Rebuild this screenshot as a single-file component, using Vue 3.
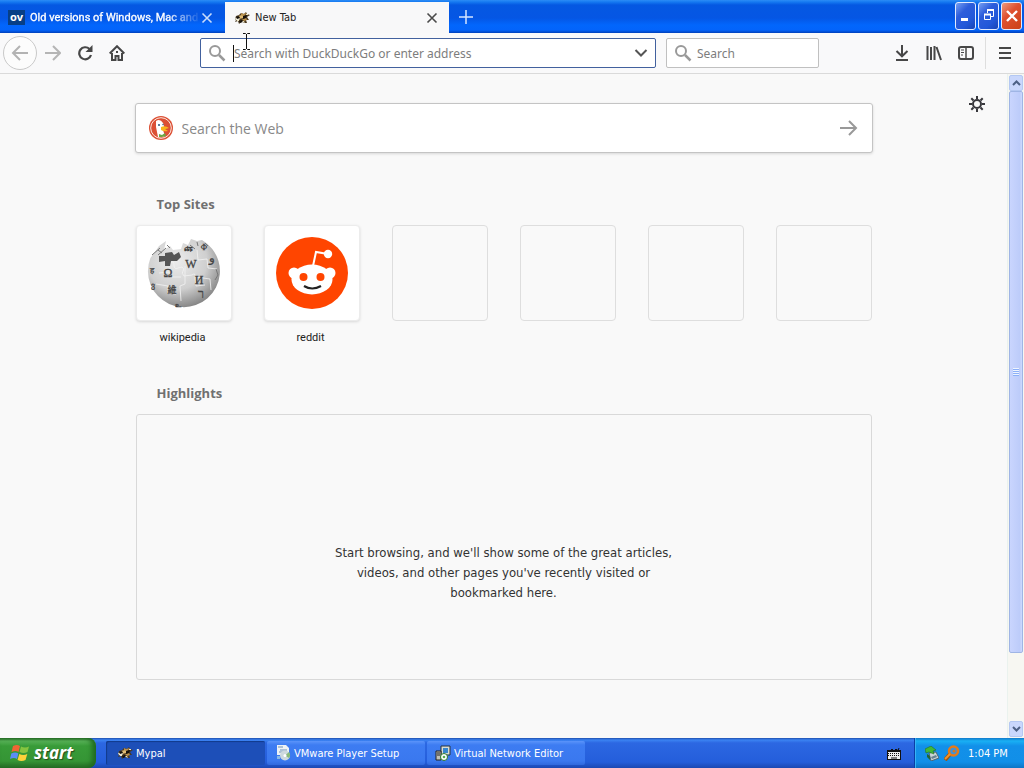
<script setup>
const emptySites = [1, 2, 3, 4]
</script>

<template>
  <div class="screen">
    <svg class="defs" aria-hidden="true">
      <defs>
        <radialGradient id="globe" cx=".4" cy=".32" r=".7"><stop offset="0" stop-color="#ececec" /><stop offset=".6" stop-color="#cfcfcf" /><stop offset="1" stop-color="#858585" /></radialGradient>
        <symbol id="raccoon" viewBox="0 0 16 14">
          <path d="M1 8 2 5 5 4 7 2 10 3 12 1 13 3 16 4 13 6 15 9 12 9 13 12 10 12 8 10 5 13 4 10 1 11 2 9Z" fill="#4b3a22" />
          <path d="m4 5 4-1 3 1-2 2-4 1Z" fill="#e0bc74" />
          <path d="m1 7 3-1 2 2-2 2-2-1Z" fill="#eeebd8" />
          <path d="m7 2 2 1 4-1-3 3-3-1ZM8 8l4-1 1 2-3 1Z" fill="#b98f4a" />
          <path d="m2 6 3-1 1 2-3 1ZM9 5l4-1-1 3-3 1ZM5 10l3-1 1 2-3 1Z" fill="#15100b" />
          <path d="m8 10 2 0 1 2-2-1ZM3 9h2v1H3ZM12 3h2v1h-2Z" fill="#efe6c4" />
        </symbol>
        <symbol id="lens" viewBox="0 0 18 18"><circle cx="7" cy="7" r="5" fill="none" stroke="#999" stroke-width="2" /><path d="m11 11 5.500 5.500" stroke="#999" stroke-width="2.500" /></symbol>
      </defs>
    </svg>

    <header class="titlebar">
      <div class="tab inactive">
        <span class="ov">ov</span>
        <span class="tab-title faded">Old versions of Windows, Mac and</span>
        <button class="tab-close" aria-label="Close old versions tab"><svg width="12" height="12" viewBox="0 0 12 12"><path d="m1.500 1.500 9 9m0-9-9 9" stroke="#c9dcfb" stroke-width="1.600" /></svg></button>
      </div>
      <div class="tab active">
        <svg class="tab-icon" width="16" height="14"><use href="#raccoon" /></svg>
        <span class="tab-title">New Tab</span>
        <button class="tab-close" aria-label="Close New Tab"><svg width="12" height="12" viewBox="0 0 12 12"><path d="m1.500 1.500 9 9m0-9-9 9" stroke="#4a4a4a" stroke-width="1.600" /></svg></button>
      </div>
      <button class="add-tab" aria-label="Open a new tab"><svg width="14" height="14" viewBox="0 0 14 14"><path d="M7 0v14M0 7h14" stroke="#d5e5ff" stroke-width="1.500" /></svg></button>
      <div class="window-buttons">
        <button aria-label="Minimize"><svg width="18" height="22" viewBox="0 0 18 22"><path d="M4 14.500h7" stroke="#fff" stroke-width="3" /></svg></button>
        <button aria-label="Restore"><svg width="18" height="22" viewBox="0 0 18 22" fill="none" stroke="#fff"><path d="M7.500 8V5.500h6v6H11" /><path d="M7 5h7" stroke-width="2" /><path d="M4.500 9.500h6v5h-6z" /><path d="M4 9.500h7" stroke-width="2" /></svg></button>
        <button class="red" aria-label="Close"><svg width="18" height="22" viewBox="0 0 18 22"><path d="m4 6 10 10m0-10L4 16" stroke="#fff" stroke-width="2.400" /></svg></button>
      </div>
    </header>

    <nav class="toolbar">
      <button class="back" aria-label="Back"><svg width="18" height="16" viewBox="0 0 18 16" fill="none" stroke="#b3b3b3" stroke-width="2"><path d="M17 8H2m7-7L2 8l7 7" /></svg></button>
      <button class="tool forward" aria-label="Forward"><svg width="16" height="16" viewBox="0 0 16 16" fill="none" stroke="#b5b5b5" stroke-width="2"><path d="M0 8h14M8 1l7 7-7 7" /></svg></button>
      <button class="tool" aria-label="Reload"><svg width="16" height="16" viewBox="0 0 16 16"><path d="M12.500 4A6 6 0 1 0 14 10" fill="none" stroke="#474747" stroke-width="2.200" /><path d="M15.500 0v7H8.500Z" fill="#474747" /></svg></button>
      <button class="tool" aria-label="Home"><svg width="16" height="16" viewBox="0 0 16 16"><path d="M.7 8.500 8 1.200l7.300 7.300" fill="none" stroke="#474747" stroke-width="2" /><path d="M3 8v7h3.500v-4h3v4H13V8" fill="none" stroke="#474747" stroke-width="2" /><path d="M7 6h2v2H7z" fill="#474747" /></svg></button>
      <div class="address">
        <svg width="18" height="18"><use href="#lens" /></svg>
        <input type="text" aria-label="Address" placeholder="Search with DuckDuckGo or enter address" />
        <button aria-label="Show history"><svg width="14" height="8" viewBox="0 0 14 8"><path d="m1.500 1 5.500 5.500L12.500 1" fill="none" stroke="#555" stroke-width="2" /></svg></button>
        <span class="caret"></span>
      </div>
      <div class="search">
        <svg width="18" height="18"><use href="#lens" /></svg>
        <input type="search" aria-label="Search" placeholder="Search" />
      </div>
      <div class="tools">
        <button class="tool" aria-label="Downloads"><svg width="16" height="16" viewBox="0 0 16 16"><path d="M8 0v11M2.500 6 8 11.300 13.500 6M2 15h12" fill="none" stroke="#474747" stroke-width="2" /></svg></button>
        <button class="tool" aria-label="Library"><svg width="16" height="16" viewBox="0 0 16 16"><path d="M1.500 1v14M5 2v13M8.500 1v14M10.500 2l4.500 13" fill="none" stroke="#474747" stroke-width="2" /></svg></button>
        <button class="tool" aria-label="Sidebar"><svg width="16" height="14" viewBox="0 0 16 14" fill="none" stroke="#474747"><rect x="1" y="1" width="14" height="12" rx="2" stroke-width="2" /><path d="M8 1v12" stroke-width="1.500" /><path d="M3 4h3M3 6.500h3M3 9h2" /></svg></button>
        <button class="tool menu" aria-label="Menu"><svg width="14" height="14" viewBox="0 0 14 14"><path d="M1 2h12M1 7h12M1 12h12" stroke="#474747" stroke-width="2" /></svg></button>
      </div>
    </nav>

    <div class="viewport">
      <main class="page">
        <button class="gear" aria-label="Customize page"><svg width="16" height="16" viewBox="0 0 16 16" fill="none" stroke="#38383d"><circle cx="8" cy="8" r="4" stroke-width="2" /><path d="M8 0v3m0 10v3M0 8h3m10 0h3M2.300 2.300l2.200 2.200m7 7 2.200 2.200m0-11.400-2.200 2.200m-7 7-2.200 2.200" stroke-width="2" /></svg></button>
        <div class="column">
          <form class="web-search" @submit.prevent>
            <svg width="24" height="24" viewBox="0 0 24 24">
              <circle cx="12" cy="12" r="12" fill="#dc5035" /><circle cx="12" cy="12" r="10.300" fill="none" stroke="#fbe7df" />
              <path d="M7 5q4-3 7 2 2 4 0 7l2 6q-4 2-7 1L7 11Z" fill="#fff" /><circle cx="10" cy="9" r="1" fill="#28567a" /><circle cx="14" cy="8.500" r=".7" fill="#28567a" />
              <path d="M12 11q4-2 8 1-3 1-4 1l3 2q-4 1-7-1Z" fill="#f9b51d" /><path d="m10 18 3 1 3-2 1 3-4 1-3 0Z" fill="#6aa744" />
            </svg>
            <input type="search" aria-label="Search the Web" placeholder="Search the Web" />
            <button aria-label="Submit search"><svg width="18" height="16" viewBox="0 0 18 16"><path d="M0 8h15M9 1l7 7-7 7" fill="none" stroke="#999" stroke-width="2" /></svg></button>
          </form>

          <section class="top-sites">
            <h2>Top Sites</h2>
            <div class="sites">
              <a href="#wikipedia" class="site">
                <span class="tile filled">
                  <svg width="74" height="74" viewBox="0 0 74 74">
                    <path d="M12 10 19 5 17 14 23 10 26 14 34 13 36 7 41 9 44 3 50 5 55 4 A36 36 0 1 1 3.400 22 L8 16Z" fill="url(#globe)" />
                    <path d="m12 20 6 0 0-3 7-1 2 3 5-3 2 5-4 4-6 0-1 5-5 0 0-5-6 1Z" fill="#555" />
                    <path d="M24 27q3-3 3 2t4 3l4-1q3 2 1 4t1 5l8-1q4-3 3 3l1 8 9-1M38 30l0 18-5 2 1 15M12 37l10-1 1 5 11 0M9 48l12 2 0 7 8 1M50 14l1 10 9-1 1 9 9 1M49 41l14 2 1 11" fill="none" stroke="#f3f3f3" stroke-width=".8" />
                    <g fill="#444" stroke="#444" stroke-width=".3" font-family="Liberation Serif, serif" font-size="12" text-anchor="middle"><text x="21" y="41">Ω</text><text x="44" y="32">W</text><text x="52" y="48">И</text><text x="65" y="26">و</text><text x="5" y="37" font-size="8">ह</text><text x="6" y="52" font-size="8">ვ</text><text x="41" y="15" font-size="8">ጩ</text><text x="57" y="14" font-size="8">Ф</text><text x="54" y="62">ר</text><text x="31" y="71" font-size="7">உ</text><text x="25" y="57" font-size="9" class="cjk">維</text></g>
                    <path d="m5 19 8-7m-2 7 8-7m1-3 3 3m-12 2 4 3M43 9l5 4m2-7 1 4m7-3 3 3M69 33l2 6-3 5" stroke="#777" fill="none" />
                  </svg>
                </span>
                <span class="site-name">wikipedia</span>
              </a>
              <a href="#reddit" class="site">
                <span class="tile filled">
                  <svg width="72" height="72" viewBox="0 0 72 72"><circle cx="36" cy="36" r="36" fill="#ff4500" /><g fill="#fff"><circle cx="18" cy="36" r="5.500" /><circle cx="54" cy="36" r="5.500" /><ellipse cx="36" cy="42.500" rx="20.500" ry="15" /><circle cx="52" cy="17" r="4.200" /></g><path d="m37 29 3-14 12 2" fill="none" stroke="#fff" stroke-width="2" /><circle cx="27.500" cy="40" r="4" fill="#ff4500" /><circle cx="44.500" cy="40" r="4" fill="#ff4500" /><path d="M28 49q8 5 17 0" fill="none" stroke="#222" stroke-width="2.200" /></svg>
                </span>
                <span class="site-name">reddit</span>
              </a>
              <div v-for="n in emptySites" :key="n" class="site"><span class="tile"></span></div>
            </div>
          </section>

          <section class="highlights">
            <h2>Highlights</h2>
            <div class="empty"><p>Start browsing, and we'll show some of the great articles, videos, and other pages you've recently visited or bookmarked here.</p></div>
          </section>
        </div>
      </main>
      <div class="scrollbar">
        <button aria-label="Scroll up"><svg width="9" height="6" viewBox="0 0 9 6"><path d="m1 5 3.500-3.500L8 5" fill="none" stroke="#4d6185" stroke-width="2" /></svg></button>
        <div class="track"><div class="thumb"><span class="grip"></span></div><div class="rest"></div></div>
        <button aria-label="Scroll down"><svg width="9" height="6" viewBox="0 0 9 6"><path d="m1 1 3.500 3.500L8 1" fill="none" stroke="#4d6185" stroke-width="2" /></svg></button>
      </div>
    </div>

    <footer class="taskbar">
      <button class="start">
        <svg width="20" height="20" viewBox="0 0 20 20"><path d="M3 3q4-2 7 0L8.500 9q-3-2-7 0Z" fill="#ef6534" /><path d="M11 3.500q4 2 8 0L17.500 9q-4 2-8 0Z" fill="#85c440" /><path d="M1.300 10.500q4-2 7 0L7 16q-3-2-7 0Z" fill="#5b8df5" /><path d="M9.300 11q4 2 8 0L15.500 17q-4 2-8 0Z" fill="#fdd23a" /></svg>
        <span>start</span>
      </button>
      <div class="tasks">
        <button class="task pressed"><svg width="16" height="14"><use href="#raccoon" /></svg>Mypal</button>
        <button class="task"><svg width="16" height="16" viewBox="0 0 16 16"><path d="M2 0h9l3 3v7H2Z" fill="#eef2f5" /><path d="M3 2h5M5 5h7M4 7h5" stroke="#6c91b7" /><circle cx="10" cy="10.500" r="5" fill="#cdd9df" /><path d="M10 10.500 14 7a5 5 0 0 1 0 6Z" fill="#88b97b" /><circle cx="10" cy="10.500" r="1.500" fill="#fff" /><path d="M2 11h3v3H2Z" fill="#8ab9e5" /></svg>VMware Player Setup</button>
        <button class="task"><svg width="16" height="16" viewBox="0 0 16 16"><path d="M6 1h9v9H6Z" fill="#d9ddd4" stroke="#26333d" /><path d="M8 3h5v5H8Z" fill="#3786ce" /><path d="M1 6h5v9H1Z" fill="#c1c1b8" stroke="#222" /><path d="M2 8h3m-3 2h3" stroke="#222" /><circle cx="9" cy="12" r="3.500" fill="#fff" stroke="#26772d" /><circle cx="9" cy="12" r="1.300" fill="#55aa4e" /></svg>Virtual Network Editor</button>
      </div>
      <button class="keyboard" aria-label="Keyboard"><svg width="14" height="13" viewBox="0 0 14 13"><path d="M4 3q1-2 2 0t2 0 2 0 2-2" fill="none" stroke="#111" /><path d="M0 4h14v9H0Z" fill="#eee" stroke="#111" stroke-width="2" /><path d="M1 6.500h12M1 8.500h12" stroke="#111" stroke-dasharray="1 1" /><path d="M4 11h6" stroke="#111" /></svg></button>
      <div class="tray">
        <svg width="14" height="15" viewBox="0 0 14 15"><path d="m4 7 7-1 3 6-8 3Z" fill="#ccd6d7" stroke="#4d6370" /><path d="m6 11 5-2 1 2-5 2Z" fill="#6a8291" /><path d="m0 3 6-3 5 4-3 1 1 3-5-2-3 1Z" fill="#41b837" stroke="#23702a" stroke-width=".6" /><path d="m2 8 3 2v4l-3-3Z" fill="#236431" /></svg>
        <svg width="16" height="16" viewBox="0 0 16 16"><path d="m6 9-5 6" stroke="#9f5410" stroke-width="4" /><circle cx="9.500" cy="6" r="4.500" fill="#3b92dc" stroke="#e37b18" stroke-width="2.500" /><path d="m6 9-5 5" stroke="#f29429" stroke-width="2" /><circle cx="10" cy="6" r="1.500" fill="#d57822" /></svg>
        <time>1:04 PM</time>
      </div>
    </footer>

    <svg class="pointer" width="9" height="17" viewBox="0 0 9 17"><path d="M1 .5h2.500l1 1 1-1H8M4.500 1v15M1 16.500h2.500l1-1 1 1H8" fill="none" stroke="#111" /></svg>
  </div>
</template>

<style>
body { margin: 0; background: #f9f9fa; }
</style>

<style scoped>
.screen { position: relative; display: flex; flex-direction: column; min-height: 100vh; font-family: "DejaVu Sans Condensed", "DejaVu Sans", sans-serif; font-size: 11px; color: #222; background: #f9f9f9; }
.screen *, .screen *::before, .screen *::after { box-sizing: border-box; }
.defs { position: absolute; width: 0; height: 0; }
button { padding: 0; border: 0; background: none; font: inherit; color: inherit; display: flex; align-items: center; justify-content: center; flex-shrink: 0; }
input { border: 0; outline: 0; padding: 0; background: none; min-width: 0; flex: 1; font: inherit; color: #222; appearance: none; }
svg { flex-shrink: 0; }
.cjk { font-family: "Noto Sans CJK TC", sans-serif; }

.titlebar { display: flex; height: 33px; background: linear-gradient(#2c8cf6 0, #1579f1 2px, #0558e2 5px, #0556e4 18px, #0266fc 25px, #0364fb 30px, #0040bb 33px); }
.tab { display: flex; align-items: center; width: 224px; margin-top: 2px; padding: 0 11px 0 8px; }
.tab.inactive { width: 225px; padding-right: 12px; color: #fff; }
.tab.active { background: #f8f8f9; }
.ov { width: 17px; height: 15px; margin-right: 5px; background: #073f86; color: #fff; font: bold 11px/13px "Noto Sans", sans-serif; text-align: center; }
.tab-icon { margin: 0 5px 0 1px; }
.tab-title { flex: 1; min-width: 0; white-space: nowrap; }
.faded { font-family: Roboto, sans-serif; mask-image: linear-gradient(90deg, #000 80%, transparent 100%); -webkit-text-stroke: 0.3px #fff; }
.tab-close { width: 12px; height: 14px; }
.add-tab { width: 34px; }
.window-buttons { display: flex; gap: 2px; margin: 2px 2px 0 auto; }
.window-buttons button { width: 21px; height: 28px; border: 1px solid #e2ebff; border-radius: 3px; background: linear-gradient(135deg, #779ff2, #2d5ddb 35%, #2258d9 70%, #1744b5); }
.window-buttons .red { background: linear-gradient(135deg, #ed9a80, #df5130 40%, #cb4117); }

.toolbar { display: flex; align-items: center; height: 41px; padding: 0 0 0 3px; background: #f9f9fa; border-bottom: 1px solid #dadada; font-family: "Noto Sans", sans-serif; font-size: 12px; }
.back { width: 34px; height: 34px; border: 1px solid #c9c9c9; border-radius: 50%; background: #fcfcfc; }
.tool { width: 32px; height: 32px; }
.address { position: relative; display: flex; align-items: center; flex: 440 1 0; min-width: 0; height: 30px; margin-left: 67px; padding: 0 7px; border: 1px solid #42619e; border-radius: 2px; background: #fff; }
.address svg, .search svg { margin-right: 8px; }
.address button svg { margin: 0; }
.address button { width: 14px; height: 24px; }
.caret { position: absolute; left: 32px; top: 6px; width: 1px; height: 17px; background: #111; }
.search { display: flex; align-items: center; flex: 137 1 0; min-width: 0; height: 30px; margin-left: 10px; padding: 0 7px; border: 1px solid #c0c0c0; border-radius: 2px; background: #fff; }
.search svg { margin-right: 5px; }
.toolbar input::placeholder { color: #7d7d7d; opacity: 1; }
.tools { display: flex; margin-left: 67px; align-items: center; }
.menu { width: 39px; margin-left: 3px; border-left: 1px solid #dedede; }

.viewport { display: flex; flex: 1; }
.page { position: relative; flex: 1; min-width: 0; padding: 29px 24px 40px; font-family: "Open Sans", sans-serif; }
.gear { position: absolute; top: 22px; right: 22px; width: 16px; height: 16px; }
.column { max-width: 738px; margin: 0 auto; }
.web-search { display: flex; align-items: center; height: 50px; padding: 0 14px 0 13px; gap: 9px; border: 1px solid #c4c4c4; border-radius: 3px; background: #fff; box-shadow: 0 1px 3px #0002; font-size: 14px; }
.web-search input::placeholder { color: #888; opacity: 1; }
h2 { margin: 0 0 0 22px; font-size: 13px; line-height: 20px; font-weight: 700; color: #707070; }
.top-sites { margin-top: 41px; }
.sites { display: flex; justify-content: space-between; margin: 11px 1px 0; }
.site { display: flex; flex-direction: column; width: 96px; color: #222; text-decoration: none; }
.tile { display: flex; align-items: center; justify-content: center; height: 96px; border: 1px solid #dedede; border-radius: 4px; }
.filled { background: #fff; border-color: #ececec; box-shadow: 0 1px 3px #0002; }
.site-name { padding-right: 2px; margin-top: 7px; line-height: 19px; text-align: center; font-family: Roboto, sans-serif; font-size: 11px; }
.highlights { margin-top: 36px; }
.empty { display: flex; justify-content: center; min-height: 266px; margin: 11px 1px 0; padding: 128px 20px 20px; border: 1px solid #d9d9d9; border-radius: 3px; }
.empty p { width: 348px; max-width: 100%; margin: 0; font-family: "DejaVu Sans Condensed", sans-serif; font-size: 13px; line-height: 20px; text-align: center; color: #333; }

.scrollbar { display: flex; flex-direction: column; width: 17px; padding: 1px 1px; border-left: 1px solid #eaf2ee; background: #f7f7f2; }
.scrollbar button { height: 16px; border: 1px solid #b4c8f2; border-radius: 2px; background: #c9d7fc; }
.track { display: flex; flex-direction: column; flex: 1; }
.thumb { display: flex; align-items: center; justify-content: center; flex: 562; border: 1px solid #9fb5e5; border-radius: 2px; background: linear-gradient(90deg, #c9d5fe, #bdccfa 80%, #cddafe); }
.rest { flex: 68; }
.grip { width: 6px; height: 8px; background: repeating-linear-gradient(#eef4fe 0 1px, #8cb0f8 1px 2px); }

.taskbar { display: flex; height: 30px; background: linear-gradient(#1f4fad 0, #3b83f2 2px, #2c67e2 5px, #245edb 24px, #1b48b2 30px); color: #fff; }
.start { width: 96px; padding-right: 13px; gap: 4px; border-radius: 0 8px 8px 0; background: linear-gradient(#2c6e2c, #58b358 3px, #389b38 8px, #359535 23px, #266d26); box-shadow: inset -4px 0 5px #206b20; color: #fff; font: italic bold 17px/24px "Open Sans", sans-serif; text-shadow: 1px 1px 1px #244a1d; }
.tasks { display: flex; flex: 1; min-width: 0; margin-left: 10px; padding: 3px 0; gap: 2px; }
.task { flex: 0 1 158px; justify-content: flex-start; gap: 3px; padding-left: 8px; border-radius: 2px; background: linear-gradient(#5b94fa, #3d7cf2 4px, #3a78ef 20px, #3069dd); white-space: nowrap; }
.task.pressed { flex-basis: 159px; padding-left: 11px; background: #1d4fb8; box-shadow: inset 1px 1px 1px #123a8b; }
.keyboard { width: 40px; }
.tray { display: flex; align-items: center; width: 110px; padding-left: 10px; gap: 5px; border-left: 1px solid #0a3ea5; background: linear-gradient(#1279ca, #19b0f4 3px, #1290e9 8px, #118fe8 24px, #0d75c5); box-shadow: inset 1px 0 #38b4f5; }
.tray time { margin-left: 3px; white-space: nowrap; }
.pointer { position: absolute; left: 242px; top: 33px; }
</style>
